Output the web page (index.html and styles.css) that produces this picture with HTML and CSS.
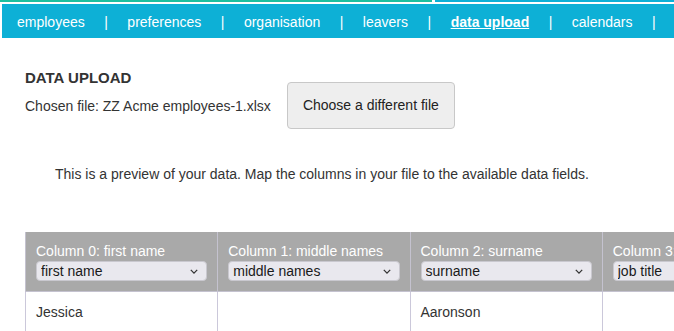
FILE: index.html
```html
<!DOCTYPE html>
<html lang="en">
<head>
    <meta charset="UTF-8">
    <title>Data upload</title>
    <link rel="stylesheet" href="styles.css">
</head>
<body>
<div class="topline"><span class="seg-green"></span><span class="seg-blue"></span></div>
<nav class="menu">
    <a href="#">employees</a><span class="sep">|</span>
    <a href="#">preferences</a><span class="sep">|</span>
    <a href="#">organisation</a><span class="sep">|</span>
    <a href="#">leavers</a><span class="sep">|</span>
    <a href="#" class="active">data upload</a><span class="sep">|</span>
    <a href="#">calendars</a><span class="sep">|</span>
</nav>
<div class="page">
    <h2>DATA UPLOAD</h2>
    <div class="chosen">
        <span>Chosen file: ZZ Acme employees-1.xlsx</span>
        <button class="btn">Choose a different file</button>
    </div>
    <p class="intro">This is a preview of your data. Map the columns in your file to the available data fields.</p>
    <div class="table-wrap">
        <table>
            <thead>
                <tr>
                    <th>Column 0: first name
                        <div class="pick"><select><option>first name</option></select><svg viewBox="0 0 10 6"><path d="M1 1l4 4 4-4"/></svg></div>
                    </th>
                    <th>Column 1: middle names
                        <div class="pick"><select><option>middle names</option></select><svg viewBox="0 0 10 6"><path d="M1 1l4 4 4-4"/></svg></div>
                    </th>
                    <th>Column 2: surname
                        <div class="pick"><select><option>surname</option></select><svg viewBox="0 0 10 6"><path d="M1 1l4 4 4-4"/></svg></div>
                    </th>
                    <th>Column 3: job title
                        <div class="pick"><select><option>job title</option></select><svg viewBox="0 0 10 6"><path d="M1 1l4 4 4-4"/></svg></div>
                    </th>
                </tr>
            </thead>
            <tbody>
                <tr><td>Jessica</td><td></td><td>Aaronson</td><td></td></tr>
            </tbody>
        </table>
    </div>
</div>
</body>
</html>
```

FILE: styles.css
```css
body {
    margin: 0;
    font-family: 'Liberation Sans', Arial, sans-serif;
    font-size: 14px;
    color: #333;
    background: #fff;
    overflow: hidden;
}

.topline {
    display: flex;
    height: 2px;
    margin-bottom: 2px;
}

.seg-green {
    width: 432px;
    background: #1dbf9f;
}

.seg-blue {
    flex: 1;
    margin-left: 3px;
    background: #0db0d6;
}

.menu {
    display: flex;
    align-items: center;
    height: 32px;
    margin-left: 2px;
    padding: 2px 0 0 15px;
    background: #0db0d6;
    color: #fff;
    white-space: nowrap;
}

.menu a {
    color: #fff;
    text-decoration: none;
}

.menu a.active {
    font-weight: bold;
    text-decoration: underline;
}

.sep {
    margin: 0 19.5px;
}

.page {
    padding: 0 25px;
}

h2 {
    margin: 31px 0 0;
    font-size: 15px;
    line-height: 18px;
    color: #333;
}

.chosen {
    display: flex;
    align-items: center;
    gap: 16px;
    margin-top: -5px;
}

.btn {
    font-family: inherit;
    font-size: 14px;
    line-height: 17px;
    color: #222;
    background: #eee;
    border: 1px solid #c8c8c8;
    border-radius: 4px;
    padding: 14px 15px;
}

.intro {
    margin: 37px 0 0 30px;
    line-height: 16px;
}

.table-wrap {
    margin-top: 50px;
    width: 700px;
}

table {
    border-collapse: collapse;
    table-layout: fixed;
    width: 770px;
}

th, td {
    width: 171px;
    padding: 10px;
    text-align: left;
    border: 1px solid #cbc8da;
}

th {
    background: #a9a9a9;
    color: #fff;
    font-weight: normal;
    padding: 11px 10px 10px;
    line-height: 16px;
    border-top: none;
    border-color: #c4c2cf;
}

td {
    line-height: 20px;
    padding: 10px 10px 11px;
}

.pick {
    position: relative;
    margin-top: 2px;
}

.pick select {
    appearance: none;
    -webkit-appearance: none;
    width: 100%;
    height: 20px;
    padding: 0 4px;
    font-family: inherit;
    font-size: 14px;
    color: #1a1a1a;
    background: #e9e8ee;
    border: 1px solid #c9c8cf;
    border-radius: 4px;
}

.pick svg {
    position: absolute;
    right: 9px;
    top: 8px;
    width: 8px;
    height: 5px;
    fill: none;
    stroke: #333;
    stroke-width: 1.6;
}
```
